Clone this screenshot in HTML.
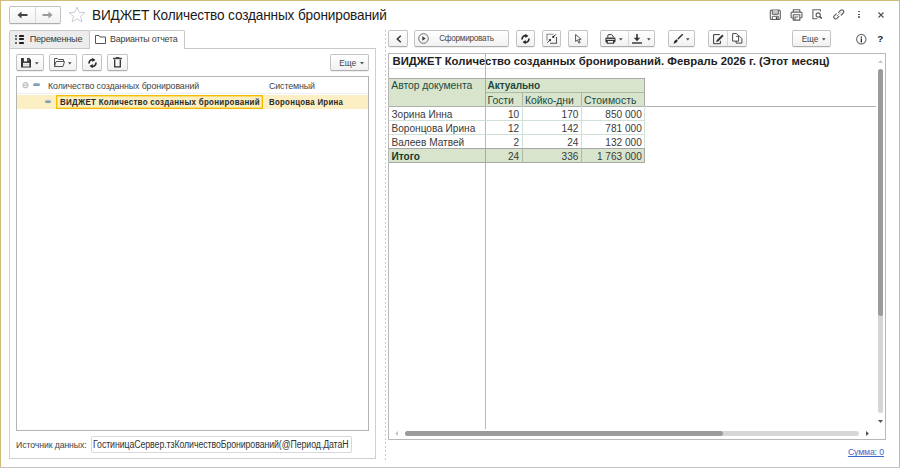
<!DOCTYPE html>
<html><head><meta charset="utf-8"><style>
html,body{margin:0;padding:0;width:900px;height:468px;overflow:hidden;background:#fff;position:relative}
.t{position:absolute;font-family:"Liberation Sans",sans-serif;line-height:1;white-space:nowrap}
</style></head><body>
<div style="position:absolute;left:0px;top:0px;width:900px;height:1px;box-sizing:border-box;background:#cdbd78"></div>
<div style="position:absolute;left:0px;top:0px;width:1px;height:468px;box-sizing:border-box;background:#cdbd78"></div>
<div style="position:absolute;left:899px;top:0px;width:1px;height:468px;box-sizing:border-box;background:#cdbd78"></div>
<div style="position:absolute;left:0px;top:467px;width:900px;height:1px;box-sizing:border-box;background:#c4c4c4"></div>
<div style="position:absolute;left:9px;top:6px;width:52px;height:18px;box-sizing:border-box;border:1px solid #c3c3c3;border-bottom-color:#adadad;border-radius:2px;background:linear-gradient(#ffffff,#f1f1f1);box-shadow:0 1px 0 rgba(0,0,0,0.06);"></div>
<div style="position:absolute;left:35px;top:7px;width:1px;height:16px;box-sizing:border-box;background:#d8d8d8"></div>
<svg style="position:absolute;left:17px;top:11px" width="11" height="8" viewBox="0 0 11 8"><path d="M3 4H10.5" stroke="#444" stroke-width="2"/><path d="M0.5 4L4.5 0.5V7.5Z" fill="#444"/></svg>
<svg style="position:absolute;left:42px;top:11px" width="11" height="8" viewBox="0 0 11 8"><path d="M0.5 4H8" stroke="#9a9a9a" stroke-width="2"/><path d="M10.5 4L6.5 0.5V7.5Z" fill="#9a9a9a"/></svg>
<svg style="position:absolute;left:68px;top:6px" width="18" height="17" viewBox="0 0 18 17"><path d="M9 1L11.2 6.3L17 6.5L12.5 10.2L14 16L9 12.8L4 16L5.5 10.2L1 6.5L6.8 6.3Z" stroke="#c8ccd4" stroke-width="1" fill="none"/></svg>
<div class="t" style="left:92.14px;top:8px;font-size:14.2px;font-weight:400;color:#1a1a1a;letter-spacing:-0.150px;transform:scaleX(0.9593);transform-origin:0 0;">ВИДЖЕТ Количество созданных бронирований</div>
<svg style="position:absolute;left:769px;top:9px" width="12" height="11" viewBox="0 0 12 11"><rect x="1.3" y="1.1" width="10" height="9.5" rx="1.3" stroke="#5f5f5f" fill="none" stroke-width="1.1"/><path d="M3.3 1.1V5.3H9.3V1.1" stroke="#5f5f5f" fill="#c8c8c8" stroke-width="1"/><path d="M3.3 10.6V7.3H9.3V10.6" stroke="#5f5f5f" fill="none" stroke-width="1"/><rect x="6.8" y="8.2" width="1.6" height="1.8" fill="#333"/></svg>
<svg style="position:absolute;left:790px;top:8.5px" width="13" height="12" viewBox="0 0 13 12"><path d="M3.3 3.1V0.8H9.8V3.1" stroke="#5f5f5f" fill="none" stroke-width="1.1"/><path d="M3.3 9H2.3Q1.1 9 1.1 7.8V4.3Q1.1 3.1 2.3 3.1H10.8Q12 3.1 12 4.3V7.8Q12 9 10.8 9H9.8" stroke="#5f5f5f" fill="none" stroke-width="1.1"/><path d="M3.3 11.1V5.7H9.8V11.1Z M5 11V8H8.2" stroke="#5f5f5f" fill="#fff" stroke-width="1.1"/></svg>
<svg style="position:absolute;left:812px;top:9px" width="11" height="11" viewBox="0 0 11 11"><path d="M8.4 2.6V0.8H0.9V9.8H5.3" stroke="#5f5f5f" fill="none" stroke-width="1.1"/><circle cx="6.2" cy="6" r="2.1" stroke="#5f5f5f" fill="none" stroke-width="1.1"/><path d="M7.7 7.6L9.8 9.6" stroke="#444" stroke-width="1.4"/></svg>
<svg style="position:absolute;left:832.5px;top:9px" width="12" height="11" viewBox="0 0 12 11"><path d="M5.6 3.4L7.6 1.4Q8.9 0.2 10.2 1.4Q11.4 2.7 10.2 4L8.2 6 M5.9 7.4L3.9 9.4Q2.6 10.6 1.3 9.4Q0.1 8.1 1.3 6.8L3.3 4.8" stroke="#5f5f5f" fill="none" stroke-width="1.2" stroke-linecap="round"/><path d="M4.2 6.8L7.4 3.6" stroke="#5f5f5f" stroke-width="1" stroke-dasharray="1.2 0.8"/></svg>
<div style="position:absolute;left:858.4px;top:10.5px;width:1.9px;height:1.9px;box-sizing:border-box;background:#4a4a4a;border-radius:50%"></div>
<div style="position:absolute;left:858.4px;top:13.5px;width:1.9px;height:1.9px;box-sizing:border-box;background:#4a4a4a;border-radius:50%"></div>
<div style="position:absolute;left:858.4px;top:16.4px;width:1.9px;height:1.9px;box-sizing:border-box;background:#4a4a4a;border-radius:50%"></div>
<svg style="position:absolute;left:877.5px;top:11.5px" width="6" height="6" viewBox="0 0 6 6"><path d="M0.5 0.5L5.5 5.5M5.5 0.5L0.5 5.5" stroke="#505050" fill="none" stroke-width="1.1"/></svg>
<div style="position:absolute;left:9px;top:48px;width:367px;height:411px;box-sizing:border-box;border:1px solid #cfcfcf;border-top:none;"></div>
<div style="position:absolute;left:184px;top:48px;width:192px;height:1px;box-sizing:border-box;background:#c8c8c8"></div>
<div style="position:absolute;left:9px;top:30px;width:81px;height:19px;box-sizing:border-box;border:1px solid #c8c8c8;border-radius:2px 2px 0 0;background:#ececec;"></div>
<div style="position:absolute;left:89px;top:30px;width:96px;height:19px;box-sizing:border-box;border:1px solid #c8c8c8;border-bottom:none;border-radius:2px 2px 0 0;background:#fff;"></div>
<div class="t" style="left:29.70px;top:35px;font-size:9.2px;font-weight:400;color:#3c3c3c;letter-spacing:-0.268px;">Переменные</div>
<div class="t" style="left:110.00px;top:35px;font-size:8.9px;font-weight:400;color:#3c3c3c;letter-spacing:-0.195px;">Варианты отчета</div>
<div style="position:absolute;left:16px;top:54px;width:28px;height:17px;box-sizing:border-box;border:1px solid #c3c3c3;border-bottom-color:#adadad;border-radius:2px;background:linear-gradient(#ffffff,#f1f1f1);box-shadow:0 1px 0 rgba(0,0,0,0.06);"></div>
<div style="position:absolute;left:49px;top:54px;width:28px;height:17px;box-sizing:border-box;border:1px solid #c3c3c3;border-bottom-color:#adadad;border-radius:2px;background:linear-gradient(#ffffff,#f1f1f1);box-shadow:0 1px 0 rgba(0,0,0,0.06);"></div>
<div style="position:absolute;left:82px;top:54px;width:20px;height:17px;box-sizing:border-box;border:1px solid #c3c3c3;border-bottom-color:#adadad;border-radius:2px;background:linear-gradient(#ffffff,#f1f1f1);box-shadow:0 1px 0 rgba(0,0,0,0.06);"></div>
<div style="position:absolute;left:107px;top:54px;width:21px;height:17px;box-sizing:border-box;border:1px solid #c3c3c3;border-bottom-color:#adadad;border-radius:2px;background:linear-gradient(#ffffff,#f1f1f1);box-shadow:0 1px 0 rgba(0,0,0,0.06);"></div>
<div style="position:absolute;left:330px;top:54px;width:39px;height:17px;box-sizing:border-box;border:1px solid #c3c3c3;border-bottom-color:#adadad;border-radius:2px;background:linear-gradient(#ffffff,#f1f1f1);box-shadow:0 1px 0 rgba(0,0,0,0.06);"></div>
<div class="t" style="left:339.30px;top:59px;font-size:8.4px;font-weight:400;color:#444;letter-spacing:-0.100px;">Еще</div>
<svg style="position:absolute;left:360px;top:62px" width="4" height="3"><path d="M0 0H4L2 2.5Z" fill="#555"/></svg>
<div style="position:absolute;left:16px;top:76px;width:353px;height:355px;box-sizing:border-box;border:1px solid #b4b4b4;"></div>
<div class="t" style="left:48.00px;top:81px;font-size:9.6px;font-weight:400;color:#444;letter-spacing:-0.100px;transform:scaleX(0.9158);transform-origin:0 0;">Количество созданных бронирований</div>
<div class="t" style="left:269.10px;top:81px;font-size:9.6px;font-weight:400;color:#444;letter-spacing:-0.100px;transform:scaleX(0.9196);transform-origin:0 0;">Системный</div>
<div style="position:absolute;left:17px;top:95px;width:351px;height:13.5px;box-sizing:border-box;background:#fcefc3"></div>
<div style="position:absolute;left:56px;top:95px;width:207px;height:13.5px;box-sizing:border-box;border:1px solid #f4be00;box-shadow:inset 0 0 0 0.7px #f8d660;background:#fcefc0"></div>
<div class="t" style="left:59.60px;top:98px;font-size:8.7px;font-weight:700;color:#2a2a2a;letter-spacing:0.300px;transform:scaleX(0.9164);transform-origin:0 0;">ВИДЖЕТ Количество созданных бронирований</div>
<div class="t" style="left:269.10px;top:98px;font-size:8.7px;font-weight:700;color:#2a2a2a;letter-spacing:0.300px;transform:scaleX(0.9036);transform-origin:0 0;">Воронцова Ирина</div>
<div class="t" style="left:16.30px;top:441px;font-size:9.3px;font-weight:400;color:#444;letter-spacing:-0.100px;transform:scaleX(0.9351);transform-origin:0 0;">Источник данных:</div>
<div style="position:absolute;left:91px;top:436px;width:261px;height:17px;box-sizing:border-box;border:1px solid #d8d8d8;border-radius:2px;background:#fff"></div>
<div class="t" style="left:93.40px;top:440px;font-size:10.0px;font-weight:400;color:#333;letter-spacing:-0.100px;transform:scaleX(0.8785);transform-origin:0 0;">ГостиницаСервер.тзКоличествоБронирований(@Период.ДатаН</div>
<div style="position:absolute;left:385px;top:30px;width:1px;height:430px;box-sizing:border-box;background:repeating-linear-gradient(#cdcdcd 0 2px,transparent 2px 4px)"></div>
<div style="position:absolute;left:388px;top:30px;width:20px;height:17px;box-sizing:border-box;border:1px solid #c3c3c3;border-bottom-color:#adadad;border-radius:2px;background:linear-gradient(#ffffff,#f1f1f1);box-shadow:0 1px 0 rgba(0,0,0,0.06);"></div>
<div style="position:absolute;left:414px;top:30px;width:95px;height:17px;box-sizing:border-box;border:1px solid #c3c3c3;border-bottom-color:#adadad;border-radius:2px;background:linear-gradient(#ffffff,#f1f1f1);box-shadow:0 1px 0 rgba(0,0,0,0.06);"></div>
<div class="t" style="left:439.20px;top:35px;font-size:8.2px;font-weight:400;color:#4a4a4a;letter-spacing:-0.268px;">Сформировать</div>
<div style="position:absolute;left:516px;top:30px;width:19px;height:17px;box-sizing:border-box;border:1px solid #c3c3c3;border-bottom-color:#adadad;border-radius:2px;background:linear-gradient(#ffffff,#f1f1f1);box-shadow:0 1px 0 rgba(0,0,0,0.06);"></div>
<div style="position:absolute;left:542px;top:30px;width:19px;height:17px;box-sizing:border-box;border:1px solid #c3c3c3;border-bottom-color:#adadad;border-radius:2px;background:linear-gradient(#ffffff,#f1f1f1);box-shadow:0 1px 0 rgba(0,0,0,0.06);"></div>
<div style="position:absolute;left:568px;top:30px;width:20px;height:17px;box-sizing:border-box;border:1px solid #c3c3c3;border-bottom-color:#adadad;border-radius:2px;background:linear-gradient(#ffffff,#f1f1f1);box-shadow:0 1px 0 rgba(0,0,0,0.06);"></div>
<div style="position:absolute;left:600px;top:30px;width:55px;height:17px;box-sizing:border-box;border:1px solid #c3c3c3;border-bottom-color:#adadad;border-radius:2px;background:linear-gradient(#ffffff,#f1f1f1);box-shadow:0 1px 0 rgba(0,0,0,0.06);"></div>
<div style="position:absolute;left:628px;top:31px;width:1px;height:15px;box-sizing:border-box;background:#d8d8d8"></div>
<div style="position:absolute;left:668px;top:30px;width:27px;height:17px;box-sizing:border-box;border:1px solid #c3c3c3;border-bottom-color:#adadad;border-radius:2px;background:linear-gradient(#ffffff,#f1f1f1);box-shadow:0 1px 0 rgba(0,0,0,0.06);"></div>
<div style="position:absolute;left:708px;top:30px;width:39px;height:17px;box-sizing:border-box;border:1px solid #c3c3c3;border-bottom-color:#adadad;border-radius:2px;background:linear-gradient(#ffffff,#f1f1f1);box-shadow:0 1px 0 rgba(0,0,0,0.06);"></div>
<div style="position:absolute;left:727px;top:31px;width:1px;height:15px;box-sizing:border-box;background:#d8d8d8"></div>
<div style="position:absolute;left:792px;top:30px;width:39px;height:17px;box-sizing:border-box;border:1px solid #c3c3c3;border-bottom-color:#adadad;border-radius:2px;background:linear-gradient(#ffffff,#f1f1f1);box-shadow:0 1px 0 rgba(0,0,0,0.06);"></div>
<div class="t" style="left:801.70px;top:35px;font-size:8.3px;font-weight:400;color:#444;letter-spacing:-0.150px;">Еще</div>
<div style="position:absolute;left:388px;top:53px;width:498px;height:387px;box-sizing:border-box;border:1px solid #b8b8b8;"></div>
<div class="t" style="left:392.50px;top:56px;font-size:11.3px;font-weight:700;color:#222;letter-spacing:0.012px;">ВИДЖЕТ Количество созданных бронирований. Февраль 2026 г. (Этот месяц)</div>
<div style="position:absolute;left:389px;top:68px;width:355px;height:1px;box-sizing:border-box;background:#ebebeb"></div>
<div style="position:absolute;left:389px;top:106px;width:487px;height:1px;box-sizing:border-box;background:#b0b0b0"></div>
<div style="position:absolute;left:485px;top:54px;width:1px;height:375px;box-sizing:border-box;background:#b8b8b8"></div>
<div style="position:absolute;left:389px;top:78px;width:256px;height:28px;box-sizing:border-box;background:#d8e5cc;border-top:1px solid #a8a8a8;border-right:1px solid #a8a8a8"></div>
<div style="position:absolute;left:485px;top:78px;width:1px;height:28px;box-sizing:border-box;background:#a8a8a8"></div>
<div style="position:absolute;left:486px;top:92px;width:159px;height:1px;box-sizing:border-box;background:#a9b9a6"></div>
<div style="position:absolute;left:522px;top:92px;width:1px;height:14px;box-sizing:border-box;background:#a9b9a6"></div>
<div style="position:absolute;left:581px;top:92px;width:1px;height:14px;box-sizing:border-box;background:#a9b9a6"></div>
<div class="t" style="left:391.30px;top:81px;font-size:10.4px;font-weight:400;color:#1d4a42;letter-spacing:-0.071px;">Автор документа</div>
<div class="t" style="left:487.60px;top:81px;font-size:10px;font-weight:700;color:#1d4a42;letter-spacing:-0.063px;">Актуально</div>
<div class="t" style="left:487.60px;top:96px;font-size:10.4px;font-weight:400;color:#1d4a42;letter-spacing:-0.066px;">Гости</div>
<div class="t" style="left:525.00px;top:96px;font-size:10.4px;font-weight:400;color:#1d4a42;letter-spacing:-0.042px;">Койко-дни</div>
<div class="t" style="left:584.00px;top:96px;font-size:10.4px;font-weight:400;color:#1d4a42;letter-spacing:0.049px;">Стоимость</div>
<div style="position:absolute;left:389px;top:120px;width:256px;height:1px;box-sizing:border-box;background:#cfe0d6"></div>
<div class="t" style="left:391.50px;top:110px;font-size:10.1px;font-weight:400;color:#3a3a3a;letter-spacing:0.000px;">Зорина Инна</div>
<div class="t" style="left:507.89px;top:110px;font-size:10.1px;font-weight:400;color:#3a3a3a;letter-spacing:0.000px;">10</div>
<div class="t" style="left:561.57px;top:110px;font-size:10.1px;font-weight:400;color:#3a3a3a;letter-spacing:0.000px;">170</div>
<div class="t" style="left:605.33px;top:110px;font-size:10.1px;font-weight:400;color:#3a3a3a;letter-spacing:0.000px;">850 000</div>
<div style="position:absolute;left:389px;top:134px;width:256px;height:1px;box-sizing:border-box;background:#cfe0d6"></div>
<div class="t" style="left:391.50px;top:124px;font-size:10.1px;font-weight:400;color:#3a3a3a;letter-spacing:0.000px;">Воронцова Ирина</div>
<div class="t" style="left:507.89px;top:124px;font-size:10.1px;font-weight:400;color:#3a3a3a;letter-spacing:0.000px;">12</div>
<div class="t" style="left:561.57px;top:124px;font-size:10.1px;font-weight:400;color:#3a3a3a;letter-spacing:0.000px;">142</div>
<div class="t" style="left:605.33px;top:124px;font-size:10.1px;font-weight:400;color:#3a3a3a;letter-spacing:0.000px;">781 000</div>
<div style="position:absolute;left:389px;top:148px;width:256px;height:1px;box-sizing:border-box;background:#cfe0d6"></div>
<div class="t" style="left:391.50px;top:138px;font-size:10.1px;font-weight:400;color:#3a3a3a;letter-spacing:0.000px;">Валеев Матвей</div>
<div class="t" style="left:513.50px;top:138px;font-size:10.1px;font-weight:400;color:#3a3a3a;letter-spacing:0.000px;">2</div>
<div class="t" style="left:567.19px;top:138px;font-size:10.1px;font-weight:400;color:#3a3a3a;letter-spacing:0.000px;">24</div>
<div class="t" style="left:605.33px;top:138px;font-size:10.1px;font-weight:400;color:#3a3a3a;letter-spacing:0.000px;">132 000</div>
<div style="position:absolute;left:522px;top:106px;width:1px;height:42px;box-sizing:border-box;background:#cfe0d6"></div>
<div style="position:absolute;left:581px;top:106px;width:1px;height:42px;box-sizing:border-box;background:#cfe0d6"></div>
<div style="position:absolute;left:644px;top:106px;width:1px;height:42px;box-sizing:border-box;background:#cfe0d6"></div>
<div style="position:absolute;left:389px;top:148px;width:256px;height:15px;box-sizing:border-box;background:#d8e5cc;border-top:1px solid #a8a8a8;border-bottom:1px solid #a8a8a8;border-right:1px solid #a8a8a8"></div>
<div style="position:absolute;left:485px;top:148px;width:1px;height:15px;box-sizing:border-box;background:#a8a8a8"></div>
<div style="position:absolute;left:522px;top:148px;width:1px;height:15px;box-sizing:border-box;background:#a9b9a6"></div>
<div style="position:absolute;left:581px;top:148px;width:1px;height:15px;box-sizing:border-box;background:#a9b9a6"></div>
<div class="t" style="left:391.50px;top:152px;font-size:10.1px;font-weight:700;color:#143a30;letter-spacing:0.000px;">Итого</div>
<div class="t" style="left:507.89px;top:152px;font-size:10.1px;font-weight:400;color:#3a3a3a;letter-spacing:0.000px;">24</div>
<div class="t" style="left:561.57px;top:152px;font-size:10.1px;font-weight:400;color:#3a3a3a;letter-spacing:0.000px;">336</div>
<div class="t" style="left:596.91px;top:152px;font-size:10.1px;font-weight:400;color:#3a3a3a;letter-spacing:0.000px;">1 763 000</div>
<svg style="position:absolute;left:878px;top:60px" width="5" height="3"><path d="M0 3H5L2.5 0Z" fill="#c8c8c8"/></svg>
<div style="position:absolute;left:878px;top:69px;width:5px;height:344px;box-sizing:border-box;background:#d6d6d6;border-radius:2.5px"></div>
<div style="position:absolute;left:878px;top:69px;width:5px;height:247px;box-sizing:border-box;background:#9b9b9b;border-radius:2.5px"></div>
<svg style="position:absolute;left:878px;top:420px" width="5" height="3"><path d="M0 0H5L2.5 3Z" fill="#555"/></svg>
<div style="position:absolute;left:405px;top:431px;width:454px;height:5px;box-sizing:border-box;background:#d6d6d6;border-radius:2.5px"></div>
<div style="position:absolute;left:405px;top:431px;width:318px;height:5px;box-sizing:border-box;background:#9b9b9b;border-radius:2.5px"></div>
<svg style="position:absolute;left:395px;top:431px" width="3" height="5"><path d="M3 0V5L0 2.5Z" fill="#c8c8c8"/></svg>
<svg style="position:absolute;left:866px;top:431px" width="3" height="5"><path d="M0 0V5L3 2.5Z" fill="#555"/></svg>
<div class="t" style="left:847.90px;top:448px;font-size:8.7px;font-weight:400;color:#3a68c8;letter-spacing:-0.118px;text-decoration:underline;text-decoration-skip-ink:none">Сумма: 0</div>
<div style="position:absolute;left:14.7px;top:34.7px;width:2px;height:2px;box-sizing:border-box;background:#6a6a6a"></div>
<div style="position:absolute;left:18.7px;top:34.7px;width:5.8px;height:2px;box-sizing:border-box;background:#1e1e1e;border-radius:0.8px"></div>
<div style="position:absolute;left:14.7px;top:38.4px;width:2px;height:2px;box-sizing:border-box;background:#6a6a6a"></div>
<div style="position:absolute;left:18.7px;top:38.4px;width:5.8px;height:2px;box-sizing:border-box;background:#1e1e1e;border-radius:0.8px"></div>
<div style="position:absolute;left:14.7px;top:42.1px;width:2px;height:2px;box-sizing:border-box;background:#6a6a6a"></div>
<div style="position:absolute;left:18.7px;top:42.1px;width:5.8px;height:2px;box-sizing:border-box;background:#1e1e1e;border-radius:0.8px"></div>
<svg style="position:absolute;left:95px;top:35px" width="11" height="9" viewBox="0 0 11 9"><path d="M0.5 8.5V0.5H4L5 2H10.5V8.5Z" stroke="#555" fill="#fff"/></svg>
<svg style="position:absolute;left:21px;top:58px" width="10" height="10" viewBox="0 0 10 10"><path d="M0 0H8.3L10 1.7V9.6H0Z" fill="#333"/><rect x="2.9" y="0" width="3.1" height="3.5" fill="#fafafa"/><rect x="6.6" y="0.8" width="1" height="2" fill="#9a9a9a"/><rect x="2" y="4.9" width="6.3" height="3.7" fill="#cfcfcf"/><rect x="2" y="5.3" width="6.3" height="0.9" fill="#fff"/><rect x="2" y="7.2" width="6.3" height="0.8" fill="#f2f2f2"/></svg>
<svg style="position:absolute;left:35px;top:62px" width="4" height="3"><path d="M0 0.2H3.6L1.8 2.4Z" fill="#444"/></svg>
<svg style="position:absolute;left:54px;top:58px" width="11" height="9" viewBox="0 0 11 9"><path d="M0.5 8.5V0.5H3.5L4.5 1.5H9.5V3 M0.5 8.5L2 3.5H10.5L9 8.5Z" stroke="#555" fill="none" stroke-linejoin="round"/></svg>
<svg style="position:absolute;left:68px;top:62px" width="4" height="3"><path d="M0 0.2H3.6L1.8 2.4Z" fill="#444"/></svg>
<svg style="position:absolute;left:87.5px;top:57.5px" width="9" height="10" viewBox="0 0 9 10"><path d="M1.2 5.5A3.3 3.3 0 0 1 5.5 1.8 M7.8 4.5A3.3 3.3 0 0 1 3.5 8.2" stroke="#2a2a2a" stroke-width="1.7" fill="none"/><path d="M4.3 -0.2L7.5 2.1L4.3 4Z M4.7 10.2L1.5 7.9L4.7 6Z" fill="#2a2a2a"/></svg>
<svg style="position:absolute;left:521px;top:34px" width="9" height="10" viewBox="0 0 9 10"><path d="M1.2 5.5A3.3 3.3 0 0 1 5.5 1.8 M7.8 4.5A3.3 3.3 0 0 1 3.5 8.2" stroke="#2a2a2a" stroke-width="1.7" fill="none"/><path d="M4.3 -0.2L7.5 2.1L4.3 4Z M4.7 10.2L1.5 7.9L4.7 6Z" fill="#2a2a2a"/></svg>
<svg style="position:absolute;left:113px;top:57px" width="9" height="11" viewBox="0 0 9 11"><path d="M0 1.5H9" stroke="#444" stroke-width="1.4"/><path d="M3 1V0.3H6V1" stroke="#444" stroke-width="1"/><path d="M1.7 2.5V9.8H7.3V2.5" stroke="#333" stroke-width="1.3" fill="none"/></svg>
<svg style="position:absolute;left:21.5px;top:82.3px" width="7" height="7" viewBox="0 0 7 7"><circle cx="3.5" cy="3.2" r="2.5" stroke="#bdbdbd" fill="#fff" stroke-width="1.2"/><path d="M2.2 3.2H4.8" stroke="#b0b0b0" stroke-width="1.2"/></svg>
<div style="position:absolute;left:33.4px;top:83.2px;width:6.4px;height:3px;box-sizing:border-box;background:linear-gradient(#a8bfd4,#6f8eaa);border-radius:1.5px"></div>
<div style="position:absolute;left:44.8px;top:99.9px;width:6.4px;height:3px;box-sizing:border-box;background:linear-gradient(#a8bfd4,#6f8eaa);border-radius:1.5px"></div>
<div style="position:absolute;left:17px;top:93px;width:351px;height:1px;box-sizing:border-box;background:#efefef"></div>
<svg style="position:absolute;left:395.5px;top:34.5px" width="6" height="8" viewBox="0 0 6 8"><path d="M4.8 0.7L1.3 4L4.8 7.3" stroke="#333" stroke-width="1.5" fill="none"/></svg>
<svg style="position:absolute;left:418px;top:33.3px" width="11" height="11" viewBox="0 0 11 11"><circle cx="5.5" cy="5.5" r="4.8" stroke="#6a6a6a" fill="none" stroke-width="1"/><path d="M4.3 3.3L7.7 5.5L4.3 7.7Z" fill="#3a3a3a"/></svg>
<svg style="position:absolute;left:546px;top:33px" width="11" height="11" viewBox="0 0 11 11"><path d="M1 7.5V1.3H7.5" stroke="#8a8a8a" fill="none" stroke-width="1.1"/><path d="M4 10.3H10.5V4" stroke="#555" fill="none" stroke-width="1.1"/><path d="M10 1.2L7.8 3.4M1.3 9.7L3.5 7.5" stroke="#444" stroke-width="1"/><circle cx="7.3" cy="3.9" r="1.1" fill="#222"/><circle cx="4" cy="7.1" r="1.1" fill="#222"/></svg>
<svg style="position:absolute;left:574.5px;top:34px" width="7" height="10" viewBox="0 0 7 10"><path d="M0.6 0.5V7.6L2.4 5.9L3.9 9.1L5.1 8.5L3.7 5.4H6.1Z" stroke="#555" fill="#fff" stroke-width="1" stroke-linejoin="round"/></svg>
<svg style="position:absolute;left:604.5px;top:34px" width="11" height="10" viewBox="0 0 11 10"><path d="M2.8 3.3V1.6Q2.8 0.6 3.8 0.6H6.4L8.2 2.3V3.3" stroke="#333" fill="none" stroke-width="1"/><path d="M1.2 3.5H9.6Q10.5 3.5 10.5 4.4V7.6Q10.5 8.4 9.6 8.4H8.8V7.1H2V8.4H1.2Q0.4 8.4 0.4 7.6V4.4Q0.4 3.5 1.2 3.5Z" fill="#333"/><rect x="1.4" y="4.9" width="8.1" height="0.9" fill="#f4f4f4"/><path d="M2.2 7V9.2H8.6V7" stroke="#333" fill="none" stroke-width="1.1"/></svg>
<svg style="position:absolute;left:619px;top:38px" width="4" height="3"><path d="M0 0.2H3.6L1.8 2.4Z" fill="#444"/></svg>
<svg style="position:absolute;left:632px;top:34px" width="10" height="10" viewBox="0 0 10 10"><path d="M5 0V4" stroke="#333" stroke-width="1.6"/><path d="M1.8 3.8H8.2L5 7.2Z" fill="#333"/><rect x="0" y="8.3" width="10" height="1.4" fill="#333"/></svg>
<svg style="position:absolute;left:646.5px;top:38px" width="4" height="3"><path d="M0 0.2H3.6L1.8 2.4Z" fill="#444"/></svg>
<svg style="position:absolute;left:672.5px;top:34px" width="10" height="10" viewBox="0 0 10 10"><path d="M9.6 0.4L5.2 4.8" stroke="#333" stroke-width="1.5" stroke-linecap="round"/><path d="M3.4 5.3L4.7 6.6Q4 9.2 0.5 9.7Q0.9 6.4 3.4 5.3Z" fill="#2a2a2a"/></svg>
<svg style="position:absolute;left:686.3px;top:38px" width="4" height="3"><path d="M0 0.2H3.6L1.8 2.4Z" fill="#444"/></svg>
<svg style="position:absolute;left:712.5px;top:33.5px" width="11" height="11" viewBox="0 0 11 11"><path d="M6.8 0.6H0.6V9.7H7.4V6.8" stroke="#3a3a3a" fill="none" stroke-width="1"/><path d="M9.3 0.6L10.6 1.9L5.2 7.4L3.1 8.1L3.8 6.1Z" fill="#333"/></svg>
<svg style="position:absolute;left:731.5px;top:33.3px" width="11" height="11" viewBox="0 0 11 11"><path d="M0.6 0.6H4.6L6.6 2.6V8.1H0.6Z" stroke="#4a4a4a" fill="#fff" stroke-width="1"/><path d="M4.1 3.3H7.6L9.9 5.6V10.1H4.1V8.1" stroke="#4a4a4a" fill="none" stroke-width="1"/></svg>
<svg style="position:absolute;left:822.4px;top:38.4px" width="4" height="3"><path d="M0 0.2H3.6L1.8 2.4Z" fill="#444"/></svg>
<svg style="position:absolute;left:856px;top:33.6px" width="11" height="11" viewBox="0 0 11 11"><circle cx="5.3" cy="5.2" r="4.7" stroke="#6a6a6a" fill="none" stroke-width="1.1"/><rect x="4.7" y="2.5" width="1.3" height="1.3" fill="#2a2a2a"/><rect x="4.7" y="4.5" width="1.3" height="3.9" fill="#2a2a2a"/></svg>
<div class="t" style="left:877.20px;top:34px;font-size:9.9px;font-weight:700;color:#1a1a1a;letter-spacing:0.000px;">?</div>
</body></html>
